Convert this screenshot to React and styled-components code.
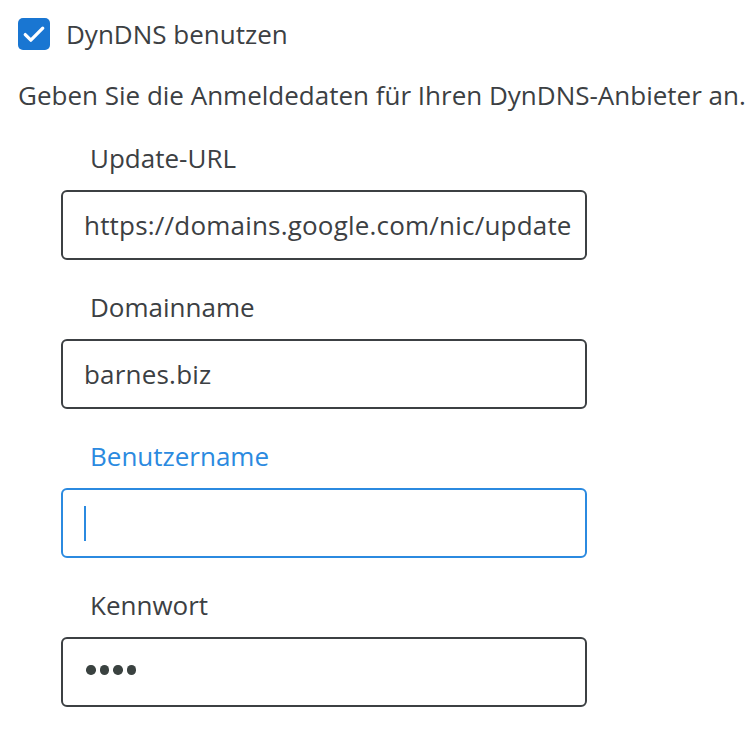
import React from 'react';
import styled, { createGlobalStyle } from 'styled-components';

/*
Basic page settings: white background, no body margin, one sans font.
*/
const GlobalStyle = createGlobalStyle`
    body {
        margin: 0;
        background: #ffffff;
        font-family: 'Open Sans', 'Noto Sans', sans-serif;
        color: #3c4043;
    }
`

const fields = [
    { label: 'Update-URL', value: 'https://domains.google.com/nic/update' },
    { label: 'Domainname', value: 'barnes.biz' },
    { label: 'Benutzername', value: '', focused: true },
    { label: 'Kennwort', value: 'abcd', secret: true },
]

/*
Check mark drawn as an svg inside the blue box.
*/
const CheckMark = () => (
    <svg width="28" height="28" viewBox="0 0 24 24" fill="none">
        <path d="M4.5 12.5l4.8 4.8L19.5 7" stroke="#ffffff" strokeWidth="2.8" strokeLinecap="round" strokeLinejoin="round" />
    </svg>
)

/*
One label with its text field below. Secret values are shown as dots.
*/
const Field = ({ label, value, focused, secret }) => (
    <FieldGroup>
        <Label focused={focused}>{label}</Label>
        <Box focused={focused}>
            <BoxInner>
                {focused && <Caret />}
                {secret
                    ? <Dots>{value.split('').map((c, i) => <Dot key={i} />)}</Dots>
                    : <BoxText>{value}</BoxText>}
            </BoxInner>
        </Box>
    </FieldGroup>
)

export default function App() {
    return (
        <>
            <GlobalStyle />
            <Page>
                <CheckRow>
                    <CheckBox><CheckMark /></CheckBox>
                    <CheckLabel>DynDNS benutzen</CheckLabel>
                </CheckRow>
                <Description>Geben Sie die Anmeldedaten für Ihren DynDNS-Anbieter an.</Description>
                <Fields>
                    {fields.map((f) => <Field key={f.label} {...f} />)}
                </Fields>
            </Page>
        </>
    );
}

const Page = styled.div`
    padding: 18px 0 0 18px;
`

const CheckRow = styled.div`
    display: flex;
    align-items: center;
    gap: 16px;
    height: 32px;
`

const CheckBox = styled.div`
    width: 32px;
    height: 32px;
    border-radius: 5px;
    background: #1976d2;
    display: flex;
    align-items: center;
    justify-content: center;
`

const CheckLabel = styled.span`
    font-size: 26px;
    line-height: 32px;
`

const Description = styled.p`
    margin: 30px 0 0 0;
    font-size: 26px;
    line-height: 30px;
    white-space: nowrap;
`

const Fields = styled.div`
    margin: 27px 0 0 43px;
    display: flex;
    flex-direction: column;
    gap: 26px;
`

const FieldGroup = styled.div`
    display: flex;
    flex-direction: column;
    gap: 11px;
`

const Label = styled.label`
    padding-left: 29px;
    font-size: 26px;
    line-height: 42px;
    color: ${(p) => (p.focused ? '#2b8ae0' : '#3c4043')};
`

const Box = styled.div`
    box-sizing: border-box;
    width: 526px;
    height: 70px;
    border: 2px solid ${(p) => (p.focused ? '#2b8ae0' : '#3c4043')};
    border-radius: 6px;
    padding: 0 14px 0 21px;
    display: flex;
    align-items: stretch;
`

const BoxInner = styled.div`
    flex: 1;
    display: flex;
    align-items: center;
    overflow: hidden;
`

const BoxText = styled.span`
    font-size: 26px;
    letter-spacing: 0.2px;
    white-space: nowrap;
    color: #3c4043;
`

const Dots = styled.span`
    display: flex;
    gap: 4px;
    padding-left: 2px;
    margin-top: -4px;
`

const Dot = styled.span`
    width: 9.5px;
    height: 9.5px;
    border-radius: 50%;
    background: #3a4240;
`

const Caret = styled.span`
    width: 2px;
    height: 35px;
    background: #2b8ae0;
`
